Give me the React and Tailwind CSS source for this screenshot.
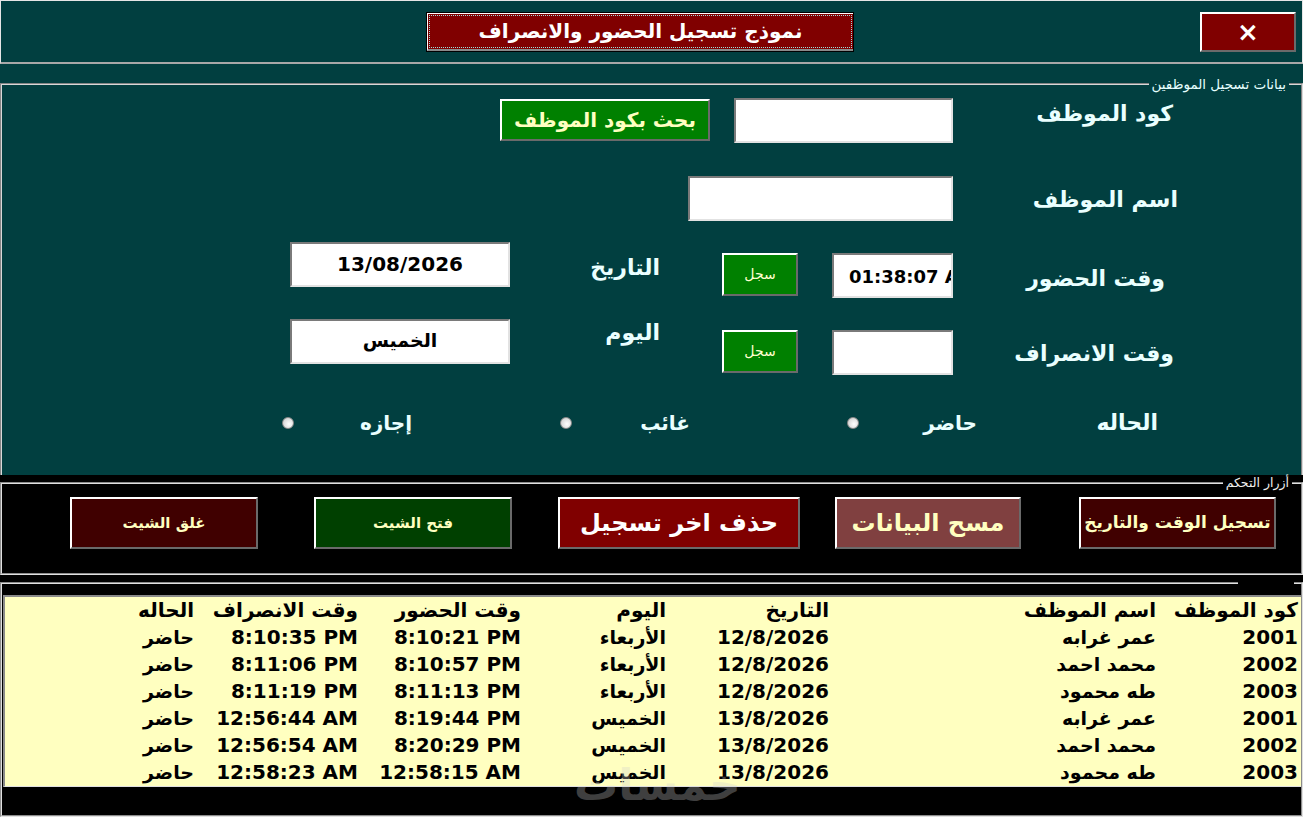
import React from "react";

const records = [
  { code: "2001", name: "عمر غرابه", date: "12/8/2026", day: "الأربعاء", inTime: "8:10:21 PM", outTime: "8:10:35 PM", state: "حاضر" },
  { code: "2002", name: "محمد احمد", date: "12/8/2026", day: "الأربعاء", inTime: "8:10:57 PM", outTime: "8:11:06 PM", state: "حاضر" },
  { code: "2003", name: "طه محمود", date: "12/8/2026", day: "الأربعاء", inTime: "8:11:13 PM", outTime: "8:11:19 PM", state: "حاضر" },
  { code: "2001", name: "عمر غرابه", date: "13/8/2026", day: "الخميس", inTime: "8:19:44 PM", outTime: "12:56:44 AM", state: "حاضر" },
  { code: "2002", name: "محمد احمد", date: "13/8/2026", day: "الخميس", inTime: "8:20:29 PM", outTime: "12:56:54 AM", state: "حاضر" },
  { code: "2003", name: "طه محمود", date: "13/8/2026", day: "الخميس", inTime: "12:58:15 AM", outTime: "12:58:23 AM", state: "حاضر" },
];

const columns = ["كود الموظف", "اسم الموظف", "التاريخ", "اليوم", "وقت الحضور", "وقت الانصراف", "الحاله"];

// 3D borders in the old Windows forms style
const raised = "border-2 border-t-white border-l-white border-b-[#6a6a6a] border-r-[#6a6a6a]";
const sunken = "border-2 border-t-[#7a7a7a] border-l-[#7a7a7a] border-b-[#e2e2e2] border-r-[#e2e2e2] bg-white";
const label = "text-[22px] font-bold leading-none text-[#eaffff] whitespace-nowrap";
const grid = "grid grid-cols-[142px_327px_163px_145px_163px_164px_1fr]";

function Radio() {
  return <span className="block w-[12px] h-[12px] rounded-full border border-[#8a8a8a] bg-[radial-gradient(circle_at_60%_60%,#ffffff,#c8c8c8)]" />;
}

function SaveButton() {
  return (
    <button className={`${raised} w-[76px] h-[43px] bg-[#008000] text-[14px] text-[#ffffd0]`}>سجل</button>
  );
}

export default function App() {
  return (
    <div dir="rtl" className="w-[1303px] h-[817px] overflow-hidden bg-black font-['DejaVu_Sans',sans-serif] select-none">
      <div className="h-[475px] bg-[#013f40] flex flex-col">
        {/* title bar */}
        <header className="h-[64px] border border-[#e6e6e6] border-b-2 border-b-[#a8a8a8] flex items-center pr-[6px]">
          <button className={`${raised} w-[96px] h-[40px] bg-[#800000] text-white text-[26px] font-bold leading-none`}>×</button>
          <div className="mr-[346px] w-[428px] h-[40px] border border-black bg-[#9a9a9a]">
            <div className="h-full border-t border-l border-t-white border-l-white border-b-2 border-b-[#8a8a8a] p-[1px] bg-[#800000]">
              <div className="h-full border border-dotted border-[#9fdcdc] flex items-center justify-center text-white text-[20px] font-bold">
                نموذج تسجيل الحضور والانصراف
              </div>
            </div>
          </div>
        </header>

        {/* employee entry */}
        <fieldset className="mt-[13px] flex-1 border-2 [border-style:groove] border-[#d8d8d8] border-b-0">
          <legend className="mr-[12px] px-[3px] text-[13.5px] leading-[14px] text-[#e6ffff]">بيانات تسجيل الموظفين</legend>

          <div className="flex items-start mt-[7px] h-[45px]">
            <div className={`w-[348px] pr-[128px] pt-[5px] ${label}`}>كود الموظف</div>
            <div className={`${sunken} w-[219px] h-[45px]`} />
            <button className={`${raised} mr-[24px] mt-[1px] w-[210px] h-[42px] bg-[#008000] text-[20px] font-bold text-[#ffffc0]`}>بحث بكود الموظف</button>
          </div>

          <div className="flex items-start mt-[33px] h-[45px]">
            <div className={`w-[348px] pr-[123px] pt-[13px] ${label}`}>اسم الموظف</div>
            <div className={`${sunken} w-[265px] h-[45px]`} />
          </div>

          <div className="flex items-start mt-[21px] h-[56px]">
            <div className={`w-[348px] pr-[136px] pt-[26px] ${label}`}>وقت الحضور</div>
            <div className={`${sunken} mt-[11px] w-[121px] h-[45px] overflow-hidden`}>
              <div dir="ltr" className="pl-[15px] pt-[8px] whitespace-nowrap text-[18px] font-bold text-black">01:38:07 AM</div>
            </div>
            <div className="mr-[34px] mt-[11px]"><SaveButton /></div>
            <div className={`w-[212px] pr-[62px] pt-[15px] ${label}`}>التاريخ</div>
            <div className={`${sunken} w-[220px] h-[45px] pt-[5px] text-center text-[20px] font-bold text-black`}>13/08/2026</div>
          </div>

          <div className="flex items-start mt-[21px] h-[56px]">
            <div className={`w-[348px] pr-[127px] pt-[24px] ${label}`}>وقت الانصراف</div>
            <div className={`${sunken} mt-[11px] w-[121px] h-[45px]`} />
            <div className="mr-[34px] mt-[11px]"><SaveButton /></div>
            <div className={`w-[212px] pr-[62px] pt-[3px] ${label}`}>اليوم</div>
            <div className={`${sunken} w-[220px] h-[45px] pt-[5px] text-center text-[19px] font-bold text-black`}>الخميس</div>
          </div>

          <div className="flex items-center mt-[32px] h-[32px]">
            <div className={`mr-[143px] w-[181px] ${label}`}>الحاله</div>
            <div className="w-[118px] text-[20px] font-bold text-[#eaffff]">حاضر</div>
            <Radio />
            <div className="mr-[157px] w-[118px] text-[20px] font-bold text-[#eaffff]">غائب</div>
            <Radio />
            <div className="mr-[148px] w-[118px] text-[20px] font-bold text-[#eaffff]">إجازه</div>
            <Radio />
          </div>
        </fieldset>
      </div>

      {/* control buttons */}
      <fieldset className="mt-[1px] h-[99px] border-2 [border-style:groove] border-[#e0e0e0]">
        <legend className="mr-[9px] px-[3px] text-[12.5px] leading-[14px] text-[#f0f0f0]">أزرار التحكم</legend>
        <div className="flex items-start pt-[7px] pr-[25px]">
          <button className={`${raised} w-[197px] h-[52px] bg-[#400000] text-[17px] font-bold text-[#ffffc0]`}>تسجيل الوقت والتاريخ</button>
          <button className={`${raised} mr-[58px] w-[186px] h-[52px] bg-[#804040] text-[24px] font-bold text-[#ffffc0]`}>مسح البيانات</button>
          <button className={`${raised} mr-[35px] w-[242px] h-[52px] bg-[#800000] text-[24px] font-bold text-white`}>حذف اخر تسجيل</button>
          <button className={`${raised} mr-[46px] w-[198px] h-[52px] bg-[#004000] text-[15px] font-bold text-[#ffffc0]`}>فتح الشيت</button>
          <button className={`${raised} mr-[56px] w-[188px] h-[52px] bg-[#400000] text-[15px] font-bold text-[#ffffc0]`}>غلق الشيت</button>
        </div>
      </fieldset>

      {/* saved records */}
      <fieldset className="relative mt-[6px] h-[236px] border-2 [border-style:groove] border-[#e0e0e0]">
        <legend className="mr-[7px] w-[56px] h-[4px]" />
        <div className="mt-[10px] ml-[1px] border-t-2 border-l-2 border-t-[#8a8a8a] border-l-[#8a8a8a] border-b border-b-[#e0e0e0]">
          <div className="bg-[#ffffc0] text-black font-bold leading-[27px]">
            <div className={`${grid} text-[20px]`}>
              {columns.map((c) => (
                <div key={c} className="pr-[3px] whitespace-nowrap">{c}</div>
              ))}
            </div>
            {records.map((r, i) => (
              <div key={i} className={`${grid} text-[19px]`}>
                <div className="pr-[3px] text-[20px]">{r.code}</div>
                <div className="pr-[3px]">{r.name}</div>
                <div className="pr-[3px] text-[20px]">{r.date}</div>
                <div className="pr-[3px]">{r.day}</div>
                <div dir="ltr" className="pr-[3px] text-right text-[20px]">{r.inTime}</div>
                <div dir="ltr" className="pr-[3px] text-right text-[20px]">{r.outTime}</div>
                <div className="pr-[3px]">{r.state}</div>
              </div>
            ))}
          </div>
        </div>
        <span className="absolute left-[572px] top-[178px] text-[44px] font-bold leading-none text-[#d0d0d0] opacity-30 pointer-events-none">خمسات</span>
      </fieldset>
    </div>
  );
}
